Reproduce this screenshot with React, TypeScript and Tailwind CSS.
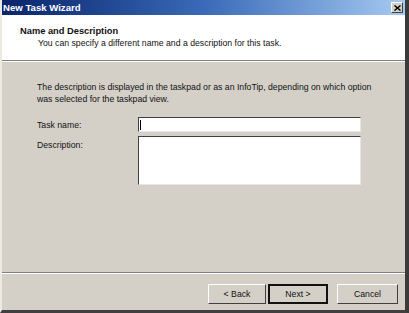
import React from "react";

export default function App() {
  return (
    <div className="w-[409px] h-[313px] overflow-hidden bg-[#d4d0c8] flex flex-col text-[8.7px] text-[#111]" style={{ fontFamily: "'Liberation Sans', Arial, sans-serif" }}>
      <div className="flex flex-col flex-1 border-l-2 border-l-[#ece9e1] border-r-[4px] border-r-[#3a3a3a] border-b-[3px] border-b-[#404040]">
        {/* title bar */}
        <div className="h-[15px] flex items-center justify-between bg-gradient-to-r from-[#0a246a] via-[#3a6ab8] to-[#a6caf0] pl-[1px] pr-[2px]">
          <span className="font-bold text-white text-[9.6px] leading-none">New Task Wizard</span>
          <div className="w-[12px] h-[11px] bg-[#d4d0c8] border border-t-white border-l-white border-r-[#404040] border-b-[#404040] flex items-center justify-center">
            <svg width="7" height="6" viewBox="0 0 7 6">
              <path d="M0.5 0.5 L6.5 5.5 M6.5 0.5 L0.5 5.5" stroke="#000" strokeWidth="1.5" />
            </svg>
          </div>
        </div>
        {/* header */}
        <div className="bg-white h-[46px] border-b border-b-[#808080] pl-[18px] pt-[10px]">
          <div className="font-bold text-[9.3px] leading-[12px]">Name and Description</div>
          <div className="pl-[18px] leading-[12px]">You can specify a different name and a description for this task.</div>
        </div>
        <div className="h-px bg-white" />
        {/* body */}
        <div className="flex-1 flex flex-col pl-[35px] pt-[19px]">
          <div className="leading-[12px]">
            The description is displayed in the taskpad or as an InfoTip, depending on which option
            <br />
            was selected for the taskpad view.
          </div>
          <div className="flex mt-[12px]">
            <div className="w-[101px] pt-[2px] leading-[12px]">Task name:</div>
            <div className="w-[223px] h-[15px] bg-white border border-t-[#404040] border-l-[#404040] border-r-[#e8e6e0] border-b-[#e8e6e0] flex items-center pl-[1px]">
              <div className="w-px h-[10px] bg-black" />
            </div>
          </div>
          <div className="flex mt-[4px]">
            <div className="w-[101px] pt-[3px] leading-[12px]">Description:</div>
            <div className="w-[223px] h-[49px] bg-white border border-t-[#404040] border-l-[#404040] border-r-[#e8e6e0] border-b-[#e8e6e0]" />
          </div>
        </div>
        {/* footer */}
        <div className="h-px bg-[#808080]" />
        <div className="h-px bg-white" />
        <div className="h-[36px] flex items-start justify-end pt-[10px] pr-[7px]">
          <button className="w-[58px] h-[20px] bg-[#d4d0c8] border border-t-white border-l-white border-r-[#404040] border-b-[#404040] text-[8.7px] leading-none">&lt; Back</button>
          <button className="w-[60px] h-[20px] ml-[2px] bg-[#d4d0c8] border-2 border-[#111] text-[8.7px] leading-none">Next &gt;</button>
          <button className="w-[61px] h-[20px] ml-[9px] bg-[#d4d0c8] border border-t-white border-l-white border-r-[#404040] border-b-[#404040] text-[8.7px] leading-none">Cancel</button>
        </div>
      </div>
    </div>
  );
}
